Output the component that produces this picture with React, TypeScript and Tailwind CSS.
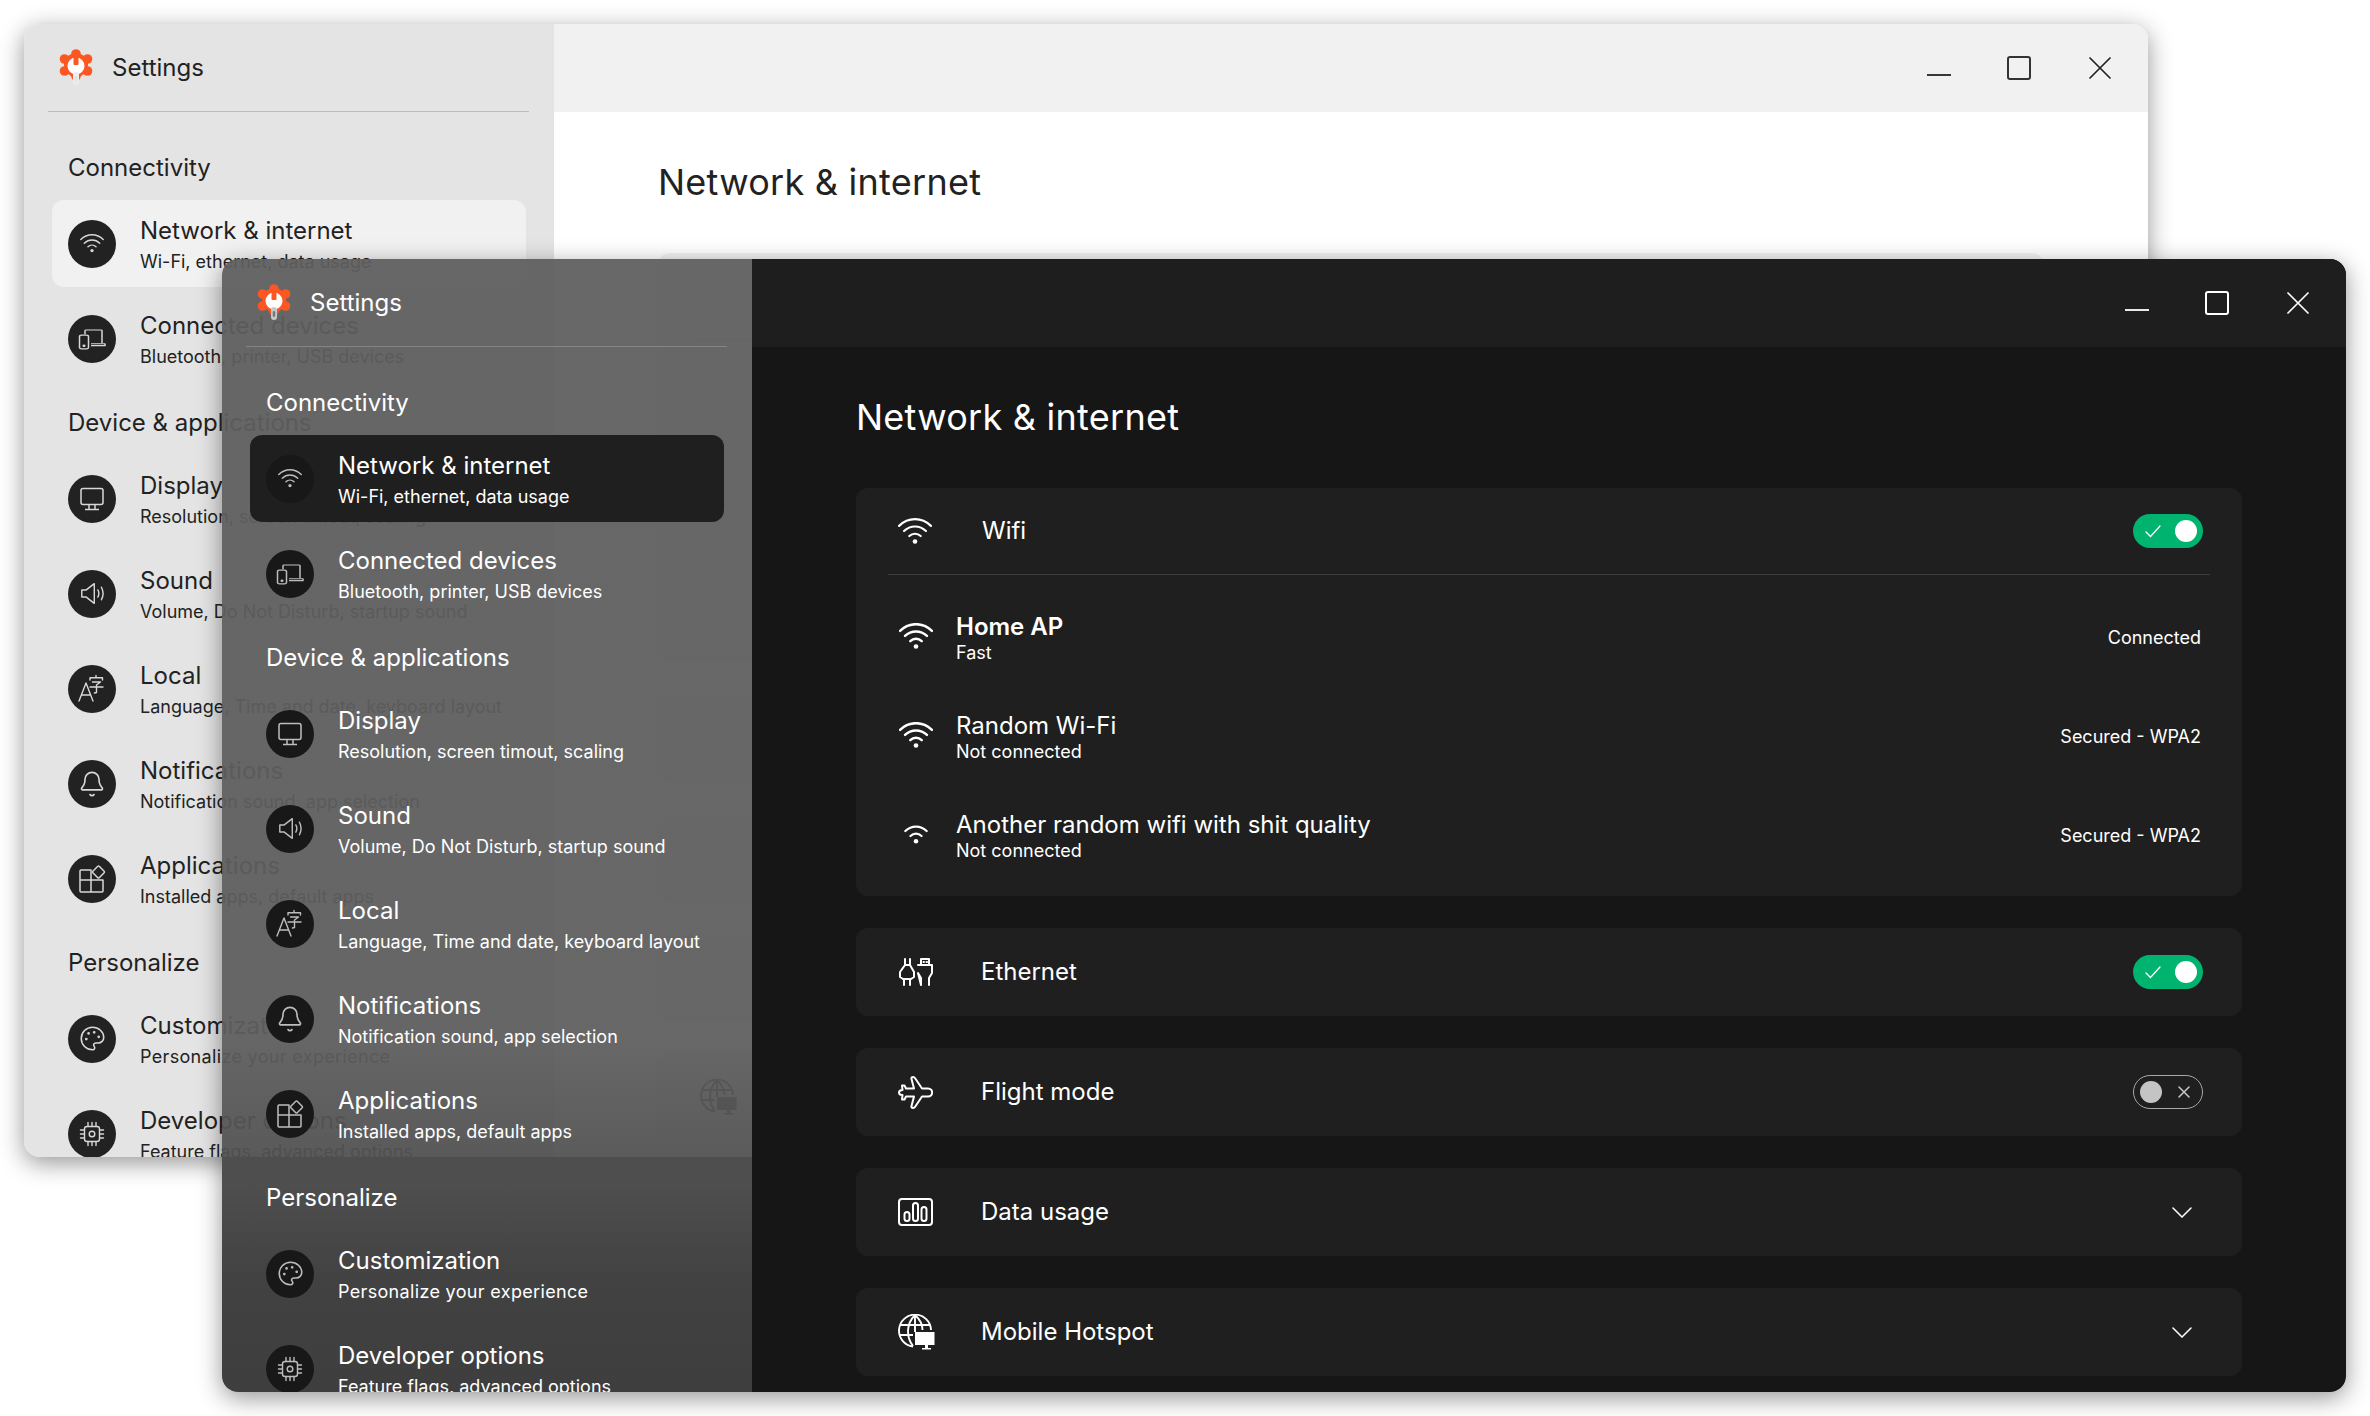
import { Bell, Palette } from "lucide-react"
import type { ReactNode } from "react"

type Theme = "light" | "dark"

const WifiIcon = ({ width = 34, strokeWidth = 1.3, arcs = 3 }: { width?: number; strokeWidth?: number; arcs?: number }) => (
  <svg
    width={width}
    height={arcs > 2 ? (width * 17) / 22 : (width * 12.5) / 16}
    viewBox={arcs > 2 ? "1 4.400 22 17" : "4 8.800 16 12.500"}
    fill="none"
    stroke="currentColor"
    strokeWidth={strokeWidth}
    strokeLinecap="round"
  >
    {arcs > 2 && <path d="M1.700 9.500C7.600 3.700 16.400 3.700 22.300 9.500" />}
    <path d="M4.900 12.800C9 8.900 15 8.900 19.100 12.800" />
    <path d="M8.300 16.100C10.400 14.100 13.600 14.100 15.700 16.100" />
    <circle cx="12" cy="19.600" r="1.500" fill="currentColor" stroke="none" />
  </svg>
)

const DevicesIcon = () => (
  <svg width="28" height="22" viewBox="0 0 28 28" preserveAspectRatio="none" fill="none" stroke="currentColor" strokeWidth="1.500" strokeLinejoin="round">
    <path d="M7 8V3.500a1 1 0 0 1 1-1h15a1 1 0 0 1 1 1V19" />
    <rect x="1.500" y="9" width="9" height="17.500" rx="2" />
    <path d="M13 20h14v2.500H13" />
    <circle cx="6" cy="22.500" r="0.800" fill="currentColor" />
  </svg>
)

const MonitorIcon = () => (
  <svg width="26" height="24" viewBox="0 0 26 24" fill="none" stroke="currentColor" strokeWidth="1.500" strokeLinejoin="round">
    <rect x="2" y="1.500" width="22" height="16" rx="2" />
    <path d="M10 17.500v5M16 17.500v5M6 22.500h14" />
  </svg>
)

const SpeakerIcon = () => (
  <svg width="25" height="25" viewBox="0 0 28 28" fill="none" stroke="currentColor" strokeWidth="1.600" strokeLinejoin="round" strokeLinecap="round">
    <path d="M2 10h5l9-7v22l-9-7H2z" />
    <path d="M20 10c1.400 2.500 1.400 5.500 0 8M24 7c2.400 4.500 2.400 9.500 0 14" />
  </svg>
)

const TranslateIcon = () => (
  <svg width="30" height="30" viewBox="0 0 30 30" fill="none" stroke="currentColor" strokeWidth="1.400" strokeLinecap="round" strokeLinejoin="round">
    <path d="M2 27 9 9l7 18M4.500 21h9" />
    <path d="M19 1.500v2M13 6V3.700h12.500V6M15.500 8h8l-4 3v7.500l-2 .5M13 13h13" />
  </svg>
)

const AppsIcon = () => (
  <svg width="30" height="30" viewBox="0 0 30 30" fill="none" stroke="currentColor" strokeWidth="1.500" strokeLinejoin="round">
    <path d="M14 6H4a1 1 0 0 0-1 1v20a1 1 0 0 0 1 1h21a1 1 0 0 0 1-1V16H14zM3 16h11v12" />
    <rect x="17" y="3.500" width="9" height="9" rx="1" transform="rotate(45 21.500 8)" />
  </svg>
)

const ChipIcon = () => (
  <svg width="26" height="26" viewBox="0 0 26 26" fill="none" stroke="currentColor" strokeWidth="1.400" strokeLinecap="round">
    <rect x="5.500" y="5.500" width="15" height="15" rx="2.500" />
    <circle cx="13" cy="13" r="2.800" />
    <path d="M9 1.500v4M13 1.500v4M17 1.500v4M9 20.500v4M13 20.500v4M17 20.500v4M1.500 9h4M1.500 13h4M1.500 17h4M20.500 9h4M20.500 13h4M20.500 17h4" />
  </svg>
)

const PlugsIcon = () => (
  <svg width="35" height="28" viewBox="0 0 35 28" fill="none" stroke="currentColor" strokeWidth="2" strokeLinejoin="round" strokeLinecap="round">
    <path d="M7 1v6M12 1v6M7 7h5l4 7v5l-3 2H5l-3-2v-5zM6 21v6M12 21v6" />
    <path d="M23 7V1h8v6M20 7h14v8l-3 5v7M23 27v-7l-3-5zM25.500 4h.5M28.500 4h.5" />
  </svg>
)

const PlaneIcon = () => (
  <svg width="35" height="35" viewBox="0 0 35 34" fill="none" stroke="currentColor" strokeWidth="2" strokeLinejoin="round">
    <path d="M15 1.500c-1.300 0-1.800.8-1.500 2L16 13H8L6.500 10H4l.5 4.500C2 14.500 1 15.500 1 17s1 2.500 3.500 2.500L4 24h2.500L8 21h8l-2.500 9.500c-.3 1.200.2 2 1.500 2 1 0 1.700-.5 2.300-1.500L24 21h6c5.500 0 5.500-8 0-8h-6L17.300 3c-.6-1-1.300-1.500-2.300-1.500z" />
  </svg>
)

const ChartIcon = () => (
  <svg width="35" height="28" viewBox="0 0 35 28" fill="none" stroke="currentColor" strokeWidth="2">
    <rect x="1" y="1" width="33" height="26" rx="3" />
    <rect x="6.500" y="14" width="5" height="9" rx="2.500" />
    <rect x="15" y="5" width="5" height="18" rx="2.500" />
    <rect x="23.500" y="9" width="5" height="14" rx="2.500" />
  </svg>
)

const GlobeIcon = () => (
  <svg width="37" height="36" viewBox="0 0 37 36" fill="none" stroke="currentColor" strokeWidth="1.900">
    <path d="M15 32.500A16 16 0 1 1 33 16" />
    <path d="M17 1c-9 9-9 22-2 31M17 1c5 4.500 7.500 10 7.500 15M2 11h30M2 21h13M17 1v17" />
    <path d="M17 18h19.500v13H30v3h3v1.500h-9V34h3v-3h-10z" fill="currentColor" stroke="none" />
  </svg>
)

const SmallPath = ({ d, w, h, strokeWidth = 1.600 }: { d: string; w: number; h: number; strokeWidth?: number }) => (
  <svg width={w} height={h} viewBox={`0 0 ${w} ${h}`} fill="none" stroke="currentColor" strokeWidth={strokeWidth} strokeLinecap="round">
    <path d={d} />
  </svg>
)

const Logo = ({ dark }: { dark: boolean }) => (
  <svg width="34" height="37" viewBox="0 0 34 37" className="shrink-0">
    <g fill="#fc5722">
      <circle cx="17" cy="16" r="12" />
      <circle cx="17" cy="5" r="4.800" />
      <circle cx="28.500" cy="10" r="4.800" />
      <circle cx="28.500" cy="22" r="4.800" />
      <circle cx="5.500" cy="10" r="4.800" />
      <circle cx="5.500" cy="22" r="4.800" />
      <circle cx="17" cy="27" r="4.800" />
    </g>
    <circle cx="17" cy="17" r="8.500" fill="#fff" />
    <rect x="14.500" y="7" width="5" height="9" rx="1" fill="#fc5722" />
    <rect x="14" y="23" width="6" height="13" rx="3" fill={dark ? "#c8c8c8" : "#ededed"} />
    <rect x="15.800" y="27" width="2.400" height="6" rx="1.200" fill={dark ? "#777" : "#e4e4e4"} />
  </svg>
)

const sidebarGroups: { title: string; items: { title: string; sub: string; icon: ReactNode; subClass?: string }[] }[] = [
  {
    title: "Connectivity",
    items: [
      { title: "Network & internet", sub: "Wi-Fi, ethernet, data usage", icon: <WifiIcon width={24} strokeWidth={1.300} /> },
      { title: "Connected devices", sub: "Bluetooth, printer, USB devices", icon: <DevicesIcon /> },
    ],
  },
  {
    title: "Device & applications",
    items: [
      { title: "Display", sub: "Resolution, screen timout, scaling", icon: <MonitorIcon /> },
      { title: "Sound", sub: "Volume, Do Not Disturb, startup sound", icon: <SpeakerIcon /> },
      { title: "Local", sub: "Language, Time and date, keyboard layout", icon: <TranslateIcon /> },
      { title: "Notifications", sub: "Notification sound, app selection", icon: <Bell size={28} strokeWidth={1.400} /> },
      { title: "Applications", sub: "Installed apps, default apps", icon: <AppsIcon /> },
    ],
  },
  {
    title: "Personalize",
    items: [
      {
        title: "Customization",
        sub: "Personalize your experience",
        icon: <Palette size={27} strokeWidth={1.400} />,
        subClass: "tracking-[0.33px]",
      },
      { title: "Developer options", sub: "Feature flags, advanced options", icon: <ChipIcon /> },
    ],
  },
]

const networks = [
  { name: "Home AP", sub: "Fast", status: "Connected", bold: true, small: false },
  { name: "Random Wi-Fi", sub: "Not connected", status: "Secured - WPA2", bold: false, small: false },
  { name: "Another random wifi with shit quality", sub: "Not connected", status: "Secured - WPA2", bold: false, small: true },
]

const Toggle = ({ on, dark }: { on: boolean; dark: boolean }) =>
  on ? (
    <div className="flex h-[34px] w-[70px] items-center justify-between rounded-full bg-[#00b36f] pl-[12px] pr-[6px] text-white">
      <SmallPath w={16} h={14} d="M1 8l4.500 4.500L15 2" strokeWidth={1.300} />
      <div className="h-[22px] w-[22px] rounded-full bg-white" />
    </div>
  ) : (
    <div
      className={`flex h-[34px] w-[70px] items-center justify-between rounded-full border pl-[6px] pr-[12px] ${
        dark ? "border-[#a8a8a8] text-[#c8c8c8]" : "border-[#777] text-[#555]"
      }`}
    >
      <div className={`h-[22px] w-[22px] rounded-full ${dark ? "bg-[#c4c4c4]" : "bg-[#888]"}`} />
      <SmallPath w={12} h={12} d="M1 1l10 10M11 1L1 11" strokeWidth={1.500} />
    </div>
  )

// the light window's icons sit under the dark sidebar, only the hotspot globe shows through in the design
const Card = ({ icon, label, right, dark, ghost }: { icon: ReactNode; label: string; right: ReactNode; dark: boolean; ghost?: boolean }) => (
  <div className={`flex h-[88px] shrink-0 items-center rounded-[12px] pl-[42px] pr-[39px] ${dark ? "bg-[#1f1f1f]" : "bg-[#f3f3f3]"}`}>
    <div className={`flex w-[83px] shrink-0 items-center ${dark || ghost ? "" : "invisible"}`}>{icon}</div>
    <span className="flex-1 text-[24px] leading-[36px]">{label}</span>
    {right}
  </div>
)

const Chevron = () => (
  <div className="mr-[11px]">
    <SmallPath w={20} h={11} d="M1 1l9 9 9-9" strokeWidth={1.500} />
  </div>
)

const Settings = ({ theme }: { theme: Theme }) => {
  const dark = theme === "dark"
  return (
    <div
      className={`absolute flex h-[1133px] w-[2124px] overflow-hidden rounded-[16px] shadow-[0_6px_24px_rgba(0,0,0,0.42)] ${
        dark ? "left-[222px] top-[259px] text-white" : "left-[24px] top-[24px] text-[#222]"
      }`}
    >
      <aside
        className={`w-[530px] shrink-0 ${
          dark
            ? "bg-[linear-gradient(180deg,rgba(94,94,94,0.94)_0%,rgba(94,94,94,0.94)_69%,rgba(81,81,81,0.94)_79.3%,rgba(71,71,71,0.94)_79.3%,rgba(54,54,54,0.94)_90%,rgba(50,50,50,0.94)_100%)]"
            : "bg-[#e4e4e4]"
        }`}
      >
        <div className="mx-[24px] mr-[25px] flex h-[88px] items-center gap-[19px] border-b border-current/20 pl-[11px]">
          <Logo dark={dark} />
          <span className="pt-[1px] text-[24px] leading-[36px]">Settings</span>
        </div>
        <nav className="px-[28px] pt-[38px]">
          {sidebarGroups.map((group, g) => (
            <div key={group.title}>
              <div className={`pb-[14px] pl-[16px] text-[24px] leading-[36px] ${g > 0 ? "pt-[23px]" : ""}`}>{group.title}</div>
              <div className="flex flex-col gap-[8px]">
                {group.items.map((item, i) => {
                  const selected = g === 0 && i === 0
                  return (
                    <div
                      key={item.title}
                      className={`flex h-[87px] items-center gap-[24px] rounded-[12px] pl-[16px] ${
                        selected ? (dark ? "bg-[#1f1f1f]" : "bg-[#f1f1f1]") : ""
                      }`}
                    >
                      <div
                        className={`flex h-[48px] w-[48px] shrink-0 items-center justify-center rounded-full ${
                          dark ? "bg-[#181818] text-[#bdbdbd]" : "bg-[#222] text-[#d8d8d8]"
                        }`}
                      >
                        {item.icon}
                      </div>
                      <div className="whitespace-nowrap pt-[1px]">
                        <div className="text-[24px] leading-[36px]">{item.title}</div>
                        <div className={`text-[18px] leading-[26px] ${item.subClass ?? ""}`}>{item.sub}</div>
                      </div>
                    </div>
                  )
                })}
              </div>
            </div>
          ))}
        </nav>
      </aside>
      <main className={`flex min-w-0 flex-1 flex-col ${dark ? "bg-[#161616]" : "bg-white"}`}>
        <div className={`flex h-[88px] shrink-0 items-center justify-end ${dark ? "bg-[#1e1e1e]" : "bg-[#f1f1f1]"}`}>
          <div className="flex items-center pr-[37px]">
            <div className="mt-[14px] mr-[56px] h-[2px] w-[24px] bg-current opacity-90" />
            <div className={`mr-[58px] h-[24px] w-[24px] rounded-[3px] border-2 ${dark ? "border-white" : "border-[#333]"}`} />
            <SmallPath w={22} h={22} d="M1 1l20 20M21 1L1 21" strokeWidth={1.700} />
          </div>
        </div>
        <div className="flex min-h-0 flex-col px-[104px]">
          <h1 className="pb-[44px] pt-[43px] text-[36px] font-normal leading-[54px] tracking-[0.25px]">Network &amp; internet</h1>
          <div className={`shrink-0 rounded-[12px] px-[32px] pb-[12px] ${dark ? "bg-[#1f1f1f]" : "bg-[#f3f3f3]"}`}>
            <div className={`flex h-[87px] items-center border-b pl-[10px] pr-[7px] ${dark ? "border-[#3d3d3d]" : "border-[#ccc]"}`}>
              <div className={`flex w-[84px] shrink-0 items-center ${dark ? "" : "invisible"}`}>
                <WifiIcon width={34} strokeWidth={1.400} />
              </div>
              <span className="flex-1 text-[24px] leading-[36px]">Wifi</span>
              <Toggle on dark={dark} />
            </div>
            <div className="pt-[12px]">
              {networks.map((n) => (
                <div key={n.name} className="flex h-[99px] items-center pl-[11px] pr-[9px]">
                  <div className={`flex w-[57px] shrink-0 items-center justify-center pr-[23px] ${dark ? "" : "invisible"}`}>
                    {n.small ? <WifiIcon width={24} strokeWidth={1.500} arcs={2} /> : <WifiIcon width={34} strokeWidth={1.600} />}
                  </div>
                  <div className="flex-1">
                    <div className={`text-[24px] leading-[32px] ${n.bold ? "font-semibold" : ""}`}>{n.name}</div>
                    <div className="text-[18px] leading-[20px]">{n.sub}</div>
                  </div>
                  <span className="pt-[1px] text-[18px]">{n.status}</span>
                </div>
              ))}
            </div>
          </div>
          <div className="mt-[32px] flex flex-col gap-[32px]">
            <Card dark={dark} icon={<PlugsIcon />} label="Ethernet" right={<Toggle on dark={dark} />} />
            <Card dark={dark} icon={<PlaneIcon />} label="Flight mode" right={<Toggle on={false} dark={dark} />} />
            <Card dark={dark} icon={<ChartIcon />} label="Data usage" right={<Chevron />} />
            <Card dark={dark} ghost icon={<GlobeIcon />} label="Mobile Hotspot" right={<Chevron />} />
          </div>
        </div>
      </main>
    </div>
  )
}

export default function App() {
  return (
    <div className="relative h-[1416px] w-[2370px] overflow-hidden bg-white font-['Inter',sans-serif]">
      <Settings theme="light" />
      <Settings theme="dark" />
    </div>
  )
}
